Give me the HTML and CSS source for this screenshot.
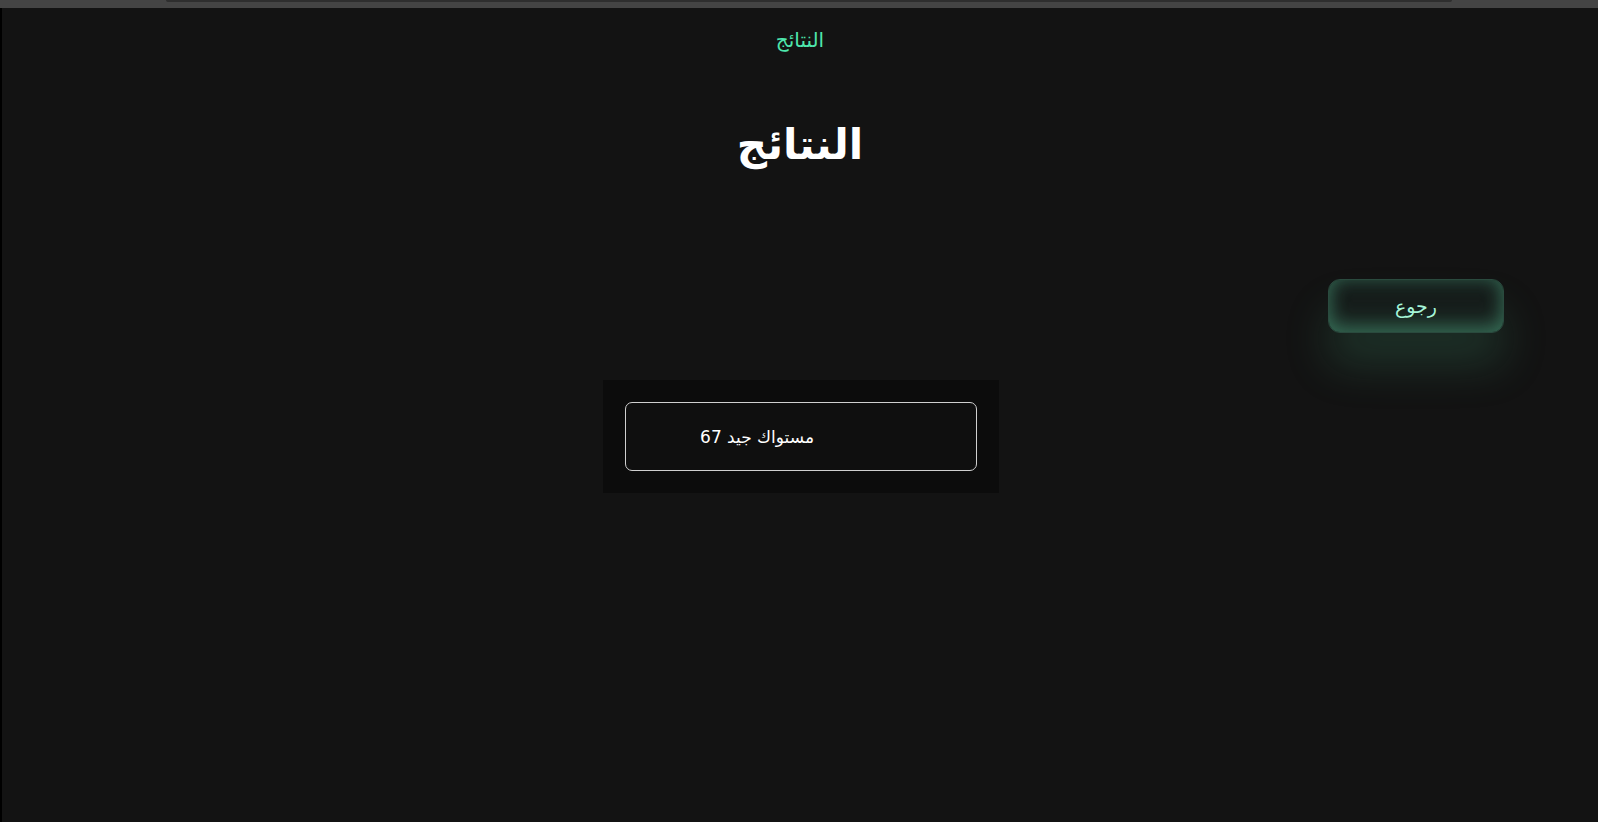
FILE: index.html
```html
<!DOCTYPE html>
<html lang="ar" dir="rtl">
<head>
<meta charset="utf-8">
<link rel="stylesheet" href="styles.css">
</head>
<body>
<div class="topbar"><div class="topbar-thumb"></div></div>
<main class="page">
  <div class="crumb">النتائج</div>
  <h1 class="title">النتائج</h1>
  <div class="actions">
    <button class="back">رجوع</button>
  </div>
  <section class="results">
    <div class="card">
      <p class="score">مستواك جيد 67</p>
    </div>
  </section>
</main>
</body>
</html>
```

FILE: styles.css
```css
html, body {
  margin: 0;
  padding: 0;
  background: #131313;
  height: 100%;
  overflow: hidden;
}
body {
  font-family: "DejaVu Sans", "Noto Sans", sans-serif;
  color: #fff;
  display: flex;
  flex-direction: column;
}
.topbar {
  height: 8px;
  background: #444444;
  flex: none;
  position: relative;
}
.topbar-thumb {
  position: absolute;
  top: 0;
  left: 166px;
  right: 146px;
  height: 2px;
  background: #2e2e2e;
  border-radius: 0 0 4px 4px;
}
.page {
  flex: 1;
  border-left: 2px solid #000;
  display: flex;
  flex-direction: column;
  align-items: center;
}
.crumb {
  margin-top: 20px;
  color: #4ee6ad;
  font-size: 20px;
  line-height: 24px;
}
.title {
  margin: 58px 0 0;
  font-size: 42px;
  font-weight: bold;
  line-height: 70px;
}
.actions {
  align-self: stretch;
  display: flex;
  justify-content: flex-start;
  padding-right: 94px;
  margin-top: 99px;
}
.back {
  width: 176px;
  height: 54px;
  border-radius: 12px;
  border: 1px solid #2a4a3e;
  background: #161d1b;
  color: #a6f5d8;
  font-family: "DejaVu Sans", sans-serif;
  font-size: 19px;
  box-shadow: inset 0 -8px 20px rgba(80, 170, 130, 0.4), inset 0 0 18px rgba(70, 150, 120, 0.35), 0 32px 44px rgba(70, 160, 120, 0.22);
}
.results {
  margin-top: 47px;
  margin-left: 2px;
  background: #0c0c0c;
  padding: 22px;
}
.card {
  width: 352px;
  height: 69px;
  border: 1px solid #d0d0d0;
  border-radius: 7px;
  background: #0f0f0f;
  display: flex;
  align-items: center;
  box-sizing: border-box;
}
.score {
  margin: 0 162px 0 0;
  font-size: 17px;
}
```
